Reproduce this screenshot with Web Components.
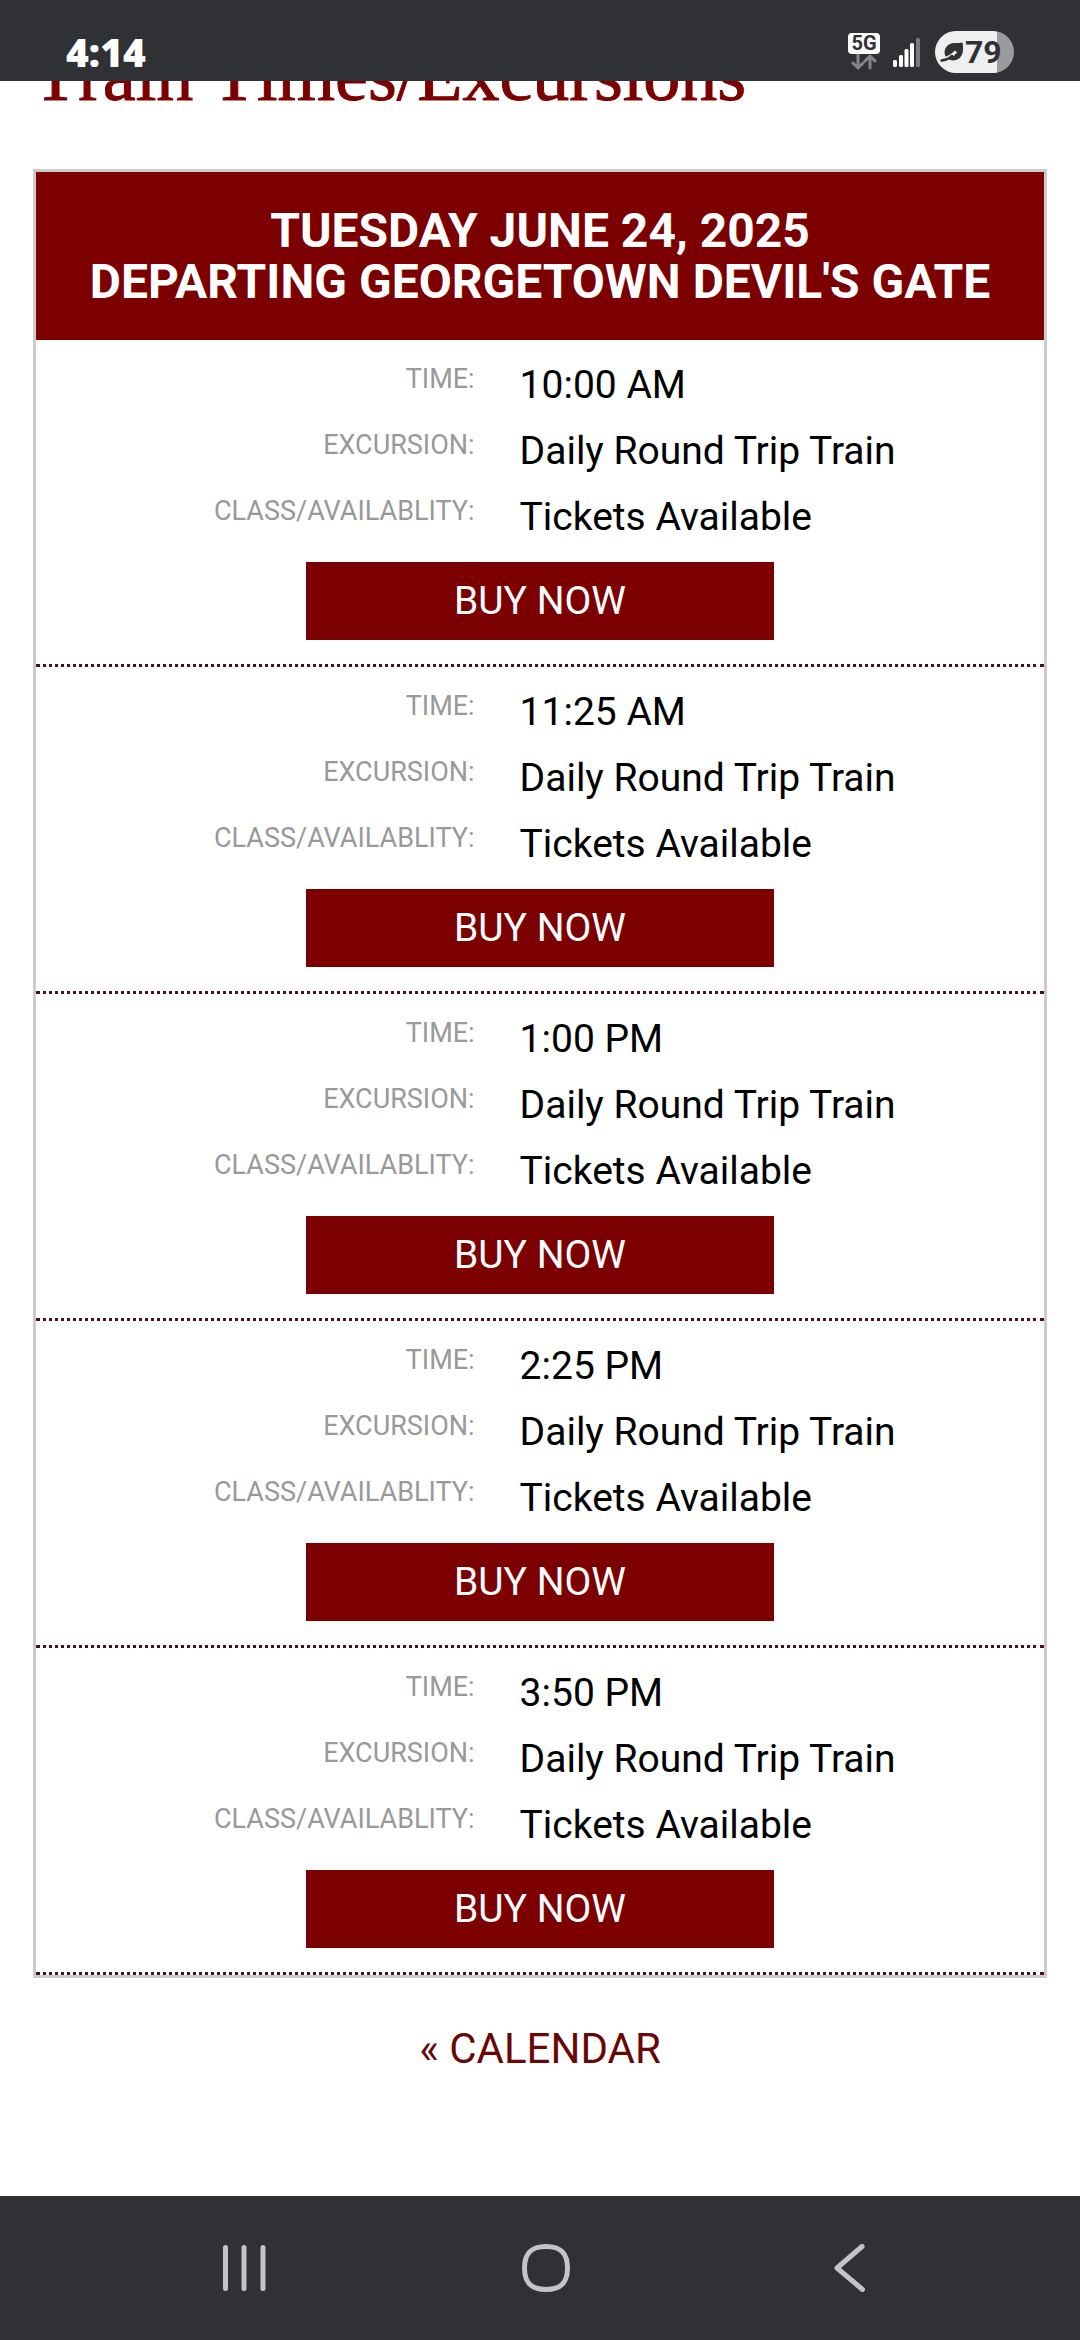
<!DOCTYPE html>
<html lang="en">
<head>
<meta charset="utf-8">
<meta name="viewport" content="width=device-width, initial-scale=1">
<title>Train Times/Excursions</title>
<style>
  body {
    --maroon: #7d0000;
    --bar: #303135;
    margin: 0;
    background: #fff;
    color: #000;
    font-family: Roboto, "Liberation Sans", sans-serif;
  }
</style>
</head>
<body>
<train-app></train-app>

<template id="train-app">
  <style>
    :host { display: flex; flex-direction: column; min-height: 100vh; }
    main { flex: 1; padding: 0 33px; overflow: hidden; }
    /* The page is scrolled, so the heading is partly under the status bar. */
    h1 {
      margin: -43px 0 56px;
      font: 400 74px/75px "Liberation Serif", serif;
      font-kerning: none;
      color: var(--maroon);
      -webkit-text-stroke: 1px var(--maroon);
    }
    .back { display: flex; justify-content: center; padding: 45px 0 33px; }
    a { color: #690606; font-size: 42px; line-height: 51px; text-decoration: none; }
  </style>
  <status-bar></status-bar>
  <main>
    <h1>Train Times/Excursions</h1>
    <departure-board>
      <span slot="date">Tuesday June 24, 2025</span>
      <span slot="station">Departing Georgetown Devil's Gate</span>
      <train-trip time="10:00 AM"></train-trip>
      <train-trip time="11:25 AM"></train-trip>
      <train-trip time="1:00 PM"></train-trip>
      <train-trip time="2:25 PM"></train-trip>
      <train-trip time="3:50 PM"></train-trip>
    </departure-board>
    <div class="back"><a href="#calendar">« CALENDAR</a></div>
  </main>
  <nav-bar></nav-bar>
</template>

<template id="status-bar">
  <style>
    :host {
      display: flex; align-items: center; justify-content: space-between;
      box-sizing: border-box; height: 81px; padding: 22px 66px 0;
      background: var(--bar); color: #fff; z-index: 1;
    }
    time { font: 800 39px/48px "Open Sans", sans-serif; }
    .icons { display: flex; align-items: center; }
    .network { display: flex; flex-direction: column; width: 32px; margin-right: 12px; }
    .network span {
      border-radius: 4px; background: #fff; color: var(--bar);
      font-size: 20px; font-weight: 700; line-height: 21px; text-align: center;
    }
    svg { display: block; }
    .signal { margin-right: 15px; }
    .battery {
      display: flex; align-items: center; box-sizing: border-box;
      width: 79px; height: 42px; padding-left: 5px; border-radius: 21px;
      background: linear-gradient(90deg, #efefef 62px, #9b9b9c 62px);
      color: var(--bar); font-size: 32px; font-weight: 700; line-height: 42px;
    }
  </style>
  <time>4:14</time>
  <div class="icons">
    <div class="network">
      <span>5G</span>
      <svg width="32" height="16" viewBox="0 0 32 16" fill="none" stroke="#85868a" stroke-width="3" stroke-linecap="round" stroke-linejoin="round"><path d="M10 1v12M5 9l5 5 5-5M22 14V3M17 7l5-5 5 5"/></svg>
    </div>
    <svg class="signal" width="28" height="30" viewBox="0 0 28 30" fill="#fff"><rect x="1" y="23" width="4" height="7" rx="1.5"/><rect x="7" y="18" width="4" height="12" rx="1.5"/><rect x="12.500" y="12" width="4" height="18" rx="1.500"/><rect x="18" y="6" width="4" height="24" rx="1.500"/><rect x="24" y="1" width="4" height="29" rx="1.500" fill="#7a7b7e"/></svg>
    <div class="battery">
      <svg width="25" height="24" viewBox="0 0 25 24"><path fill="#303135" d="M22.500 2.500C18 3.500 13 2 9 4.500 5 7 4 11 5 15c1.500 4 6 6.500 11 5 7-2 8-10 6.500-17.500z"/><path d="M16 11.500C13 15 8 18.500 1 19.500" fill="none" stroke="#efefef" stroke-width="3"/><path d="M1.500 20.500C5 20 9 19 12 16" fill="none" stroke="#303135" stroke-width="2.500" stroke-linecap="round"/></svg>
      79
    </div>
  </div>
</template>

<template id="departure-board">
  <style>
    :host { display: block; border: 3px solid #ccc; }
    h2 {
      display: flex; flex-direction: column; margin: 0; padding: 33px 12px;
      background: var(--maroon); color: #fff;
      font-size: 48px; font-weight: 700; line-height: 51px;
      text-align: center; text-transform: uppercase;
    }
  </style>
  <h2><slot name="date"></slot><slot name="station"></slot></h2>
  <slot></slot>
</template>

<template id="train-trip">
  <style>
    :host {
      display: flex; flex-direction: column; align-items: center;
      padding: 12px 0 24px; border-bottom: 3px dotted #4a1113;
    }
    dl {
      display: grid; grid-template-columns: 45% 1fr; grid-auto-rows: 66px;
      width: 100%; margin: 0 0 12px;
    }
    dt {
      padding-right: 15px; color: #999; font-size: 27px; line-height: 54px;
      text-align: right; text-transform: uppercase;
    }
    dd { margin: 0; padding-left: 30px; font-size: 39px; line-height: 66px; }
    button {
      width: 468px; max-width: 100%; padding: 0; border: 0; border-radius: 0;
      background: var(--maroon); color: #fff;
      font: inherit; font-size: 39px; line-height: 78px;
    }
  </style>
  <dl>
    <dt>Time:</dt><dd class="time"></dd>
    <dt>Excursion:</dt><dd>Daily Round Trip Train</dd>
    <dt>Class/Availablity:</dt><dd>Tickets Available</dd>
  </dl>
  <button type="button">BUY NOW</button>
</template>

<template id="nav-bar">
  <style>
    :host {
      display: grid; grid-template-columns: repeat(3, 1fr);
      height: 144px; padding: 0 81px 0 93px; background: var(--bar);
    }
    button { display: grid; place-items: center; padding: 0; border: 0; background: none; }
    svg { fill: none; stroke: #c4c4c7; stroke-width: 5; stroke-linecap: round; stroke-linejoin: round; }
  </style>
  <button type="button" aria-label="Recent apps"><svg width="48" height="48" viewBox="0 0 48 48"><path d="M5.500 3.500v41M24 3.500v41M43 3.500v41"/></svg></button>
  <button type="button" aria-label="Home"><svg width="48" height="48" viewBox="0 0 48 48"><path d="M24 2.500C39 2.500 45.500 9 45.500 24S39 45.500 24 45.500 2.500 39 2.500 24 9 2.500 24 2.500z"/></svg></button>
  <button type="button" aria-label="Back"><svg width="48" height="48" viewBox="0 0 48 48"><path d="M38 2.500L13 24l25.500 21.500"/></svg></button>
</template>

<script>
  class TemplateElement extends HTMLElement {
    constructor() {
      super();
      const template = document.getElementById(this.localName);
      this.attachShadow({ mode: "open" }).append(document.importNode(template.content, true));
    }
  }
  class StatusBar extends TemplateElement {}
  class DepartureBoard extends TemplateElement {}
  class NavBar extends TemplateElement {}
  class TrainApp extends TemplateElement {}
  class TrainTrip extends TemplateElement {
    connectedCallback() {
      this.shadowRoot.querySelector(".time").textContent = this.getAttribute("time");
    }
  }
  customElements.define("status-bar", StatusBar);
  customElements.define("departure-board", DepartureBoard);
  customElements.define("train-trip", TrainTrip);
  customElements.define("nav-bar", NavBar);
  customElements.define("train-app", TrainApp);
</script>
</body>
</html>
